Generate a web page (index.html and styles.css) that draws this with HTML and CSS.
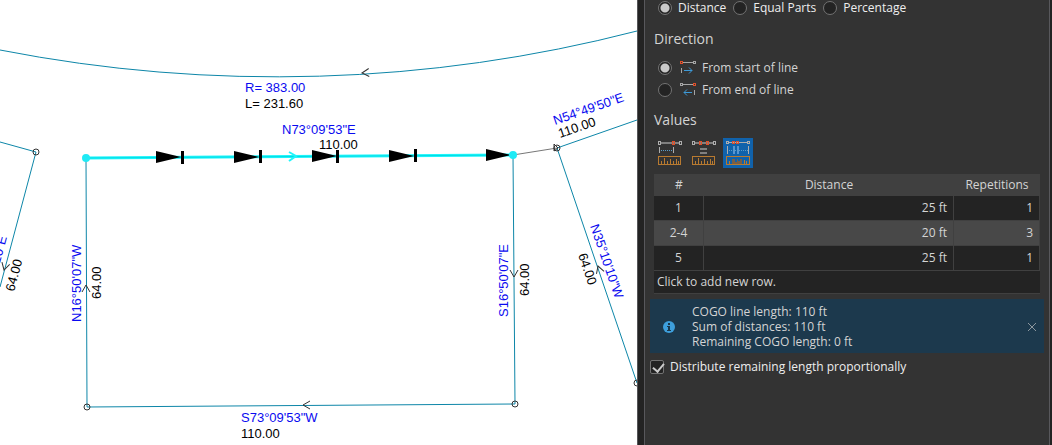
FILE: index.html
```html
<!DOCTYPE html>
<html lang="en">
<head>
<meta charset="UTF-8" />
<meta name="viewport" content="width=device-width, initial-scale=1" />
<title>Divide Line</title>
<link rel="stylesheet" href="styles.css">
</head>
<body>

<main class="map">
  <svg class="parcels" viewBox="0 0 637 445" preserveAspectRatio="xMinYMin slice" role="img" aria-label="Parcel map">
    <defs>
      <path id="tick" d="M7 -4 L0 0 L7 4" />
      <path id="arrow" d="M-26 -6 L-1 0 L-26 6 Z" />
      <rect id="stop" x="-1" y="-6" width="3" height="13" />
    </defs>

    <!-- boundaries -->
    <g class="boundary">
      <path d="M0 50 A1440 1440 0 0 0 637 31" />
      <path d="M0 142 L36 152 L0 287" />
      <path d="M86 158 L87 407 L515 404 L513 155" />
      <path d="M637 120 L557 148 L637 383" />
    </g>
    <path class="link" d="M513 155 L557 148" />

    <!-- selected line -->
    <path class="selected" d="M86 158 L513 155" />
    <path class="selected-core" d="M86 158 L513 155" />
    <path class="selected-tick" d="M289 152 L296 156 L289 161" />
    <g class="split">
      <use href="#arrow" x="182" y="157" />
      <use href="#stop" x="182" y="157" />
      <use href="#arrow" x="260" y="157" />
      <use href="#stop" x="260" y="156" />
      <use href="#arrow" x="338" y="156" />
      <use href="#stop" x="337" y="156" />
      <use href="#arrow" x="415" y="156" />
      <use href="#stop" x="415" y="155" />
      <use href="#arrow" x="512" y="155" />
    </g>
    <circle class="node-selected filled" cx="86" cy="158" r="3" />
    <circle class="node-selected filled" cx="513" cy="155" r="3" />

    <!-- direction ticks -->
    <g class="tick">
      <use href="#tick" transform="translate(362 73) rotate(-4)" />
      <use href="#tick" transform="translate(303 405)" />
      <use href="#tick" transform="translate(86 285) rotate(90)" />
      <use href="#tick" transform="translate(514 277) rotate(-90)" />
      <use href="#tick" transform="translate(598 266) rotate(71)" />
      <use href="#tick" transform="translate(4 270) rotate(-75)" />
    </g>
    <g class="node">
      <circle cx="36" cy="152" r="3" />
      <circle cx="87" cy="407" r="3" />
      <circle cx="515" cy="404" r="3" />
      <circle cx="557" cy="148" r="3" />
      <path d="M554 144 V151 L558 148 Z" />
      <circle cx="637" cy="383" r="3" />
    </g>

    <!-- labels -->
    <g class="bearing">
      <text x="245" y="92">R= 383.00</text>
      <text x="282" y="134">N73°09'53"E</text>
      <text x="241" y="422">S73°09'53"W</text>
      <text transform="translate(81 322) rotate(-90)">N16°50'07"W</text>
      <text transform="translate(508 317) rotate(-90)">S16°50'07"E</text>
      <text transform="translate(555 125) rotate(-19)">N54°49'50"E</text>
      <text transform="translate(590 226) rotate(71)">N35°10'10"W</text>
      <text transform="translate(7 237) rotate(-75)" text-anchor="end">N35°10'10"E</text>
    </g>
    <g class="length">
      <text x="245" y="108">L= 231.60</text>
      <text x="319" y="149">110.00</text>
      <text x="241" y="438">110.00</text>
      <text transform="translate(101 299) rotate(-90)">64.00</text>
      <text transform="translate(529 296) rotate(-90)">64.00</text>
      <text transform="translate(560 138) rotate(-19)">110.00</text>
      <text transform="translate(578 255) rotate(71)">64.00</text>
      <text transform="translate(14 292) rotate(-75)">64.00</text>
    </g>
  </svg>
</main>

<aside class="dock">
  <form class="panel">
    <div class="options">
      <label class="option"><input type="radio" name="method" checked />Distance</label>
      <label class="option"><input type="radio" name="method" />Equal Parts</label>
      <label class="option"><input type="radio" name="method" />Percentage</label>
    </div>

    <h2>Direction</h2>
    <div class="directions">
      <label class="option">
        <input type="radio" name="direction" checked />
        <svg class="direction-icon" viewBox="0 1 16 14" aria-hidden="true">
          <path class="rail" d="M3 2.5 H13" />
          <rect class="hot" x="0.5" y="1.5" width="2" height="2" />
          <rect class="rail" x="13.5" y="1.5" width="2" height="2" />
          <path class="rail" d="M1.5 8 V13" />
          <path class="flow" d="M4 10.5 H12 M9 7.5 L12 10.5 L9 13.5" />
        </svg>
        From start of line
      </label>
      <label class="option">
        <input type="radio" name="direction" />
        <svg class="direction-icon" viewBox="0 1 16 14" aria-hidden="true">
          <path class="rail" d="M3 2.5 H13" />
          <rect class="rail" x="0.5" y="1.5" width="2" height="2" />
          <rect class="hot" x="13.5" y="1.5" width="2" height="2" />
          <path class="rail" d="M14.5 8 V13" />
          <path class="flow" d="M12 10.5 H4 M7 7.5 L4 10.5 L7 13.5" />
        </svg>
        From end of line
      </label>
    </div>

    <h2 class="values">Values</h2>
    <div class="tools">
      <button type="button" class="tool" aria-label="Single distance">
        <svg viewBox="0 0 24 24" aria-hidden="true">
          <path class="bar" d="M3 2 H21" />
          <rect class="end" x="0.5" y="0.5" width="2" height="3" />
          <rect class="end" x="21.5" y="0.5" width="2" height="3" />
          <rect class="hot" x="14.5" y="0.5" width="2" height="3" />
          <path class="end" d="M1.5 6 V12 M15.5 6 V12" />
          <path class="dots" d="M3 9.5 H14" />
          <rect class="ruler" x="0.5" y="15.5" width="22" height="8" />
          <path class="ruler" d="M3.5 20 V23 M6.5 17 V23 M9.5 20 V23 M12.5 18 V23 M15.5 20 V23 M18.5 18 V23 M20.5 20 V23" />
        </svg>
      </button>
      <button type="button" class="tool" aria-label="Equal distances">
        <svg viewBox="0 0 24 24" aria-hidden="true">
          <path class="bar" d="M3 2 H21" />
          <rect class="end" x="0.5" y="0.5" width="2" height="3" />
          <rect class="end" x="21.5" y="0.5" width="2" height="3" />
          <rect class="hot" x="7.5" y="0.5" width="2" height="3" />
          <rect class="hot" x="14.5" y="0.5" width="2" height="3" />
          <path class="bar" d="M8 8 H15 M8 12 H15" />
          <rect class="ruler" x="0.5" y="15.5" width="22" height="8" />
          <path class="ruler" d="M3.5 20 V23 M6.5 17 V23 M9.5 20 V23 M12.5 18 V23 M15.5 20 V23 M18.5 18 V23 M20.5 20 V23" />
        </svg>
      </button>
      <button type="button" class="tool active" aria-label="Variable distances" aria-pressed="true">
        <svg viewBox="0 0 24 24" aria-hidden="true">
          <path class="end" d="M3 1.5 H21" />
          <rect class="end" x="0.5" y="0.5" width="2" height="2" />
          <rect class="end" x="21.5" y="0.5" width="2" height="2" />
          <rect class="hot" x="6.5" y="0.5" width="2" height="2" />
          <rect class="hot" x="10.5" y="0.5" width="2" height="2" />
          <path class="end" d="M1.5 5 V13 M22.5 5 V13" />
          <path class="gap" d="M8 5 V13 M12 5 V13" />
          <path class="dots" d="M3 9.5 H22" />
          <rect class="ruler" x="0.5" y="15.5" width="23" height="8" />
          <path class="ruler" d="M3.5 20 V23 M20.5 20 V23 M18.5 19 V23" />
          <path class="blocks" d="M6 23 V18 H9 V21 H11 V18 H12 V20 H14 V18 H16 V23 Z" />
        </svg>
      </button>
    </div>

    <table class="grid">
      <thead>
        <tr><th class="num">#</th><th>Distance</th><th class="reps">Repetitions</th></tr>
      </thead>
      <tbody>
        <tr><td>1</td><td>25 ft</td><td>1</td></tr>
        <tr class="current"><td>2-4</td><td>20 ft</td><td>3</td></tr>
        <tr><td>5</td><td>25 ft</td><td>1</td></tr>
      </tbody>
      <tfoot>
        <tr><td colspan="3"><button type="button" class="add-row">Click to add new row.</button></td></tr>
      </tfoot>
    </table>

    <div class="message">
      <svg class="info" viewBox="0 0 12 12" aria-hidden="true">
        <circle cx="6" cy="6" r="6" />
        <path d="M5 2 H7 V4 H5 Z M4 5 H7 V9 H8 V10 H4 V9 H5 V6 H4 Z" />
      </svg>
      <p>COGO line length: 110 ft<br>Sum of distances: 110 ft<br>Remaining COGO length: 0 ft</p>
      <button type="button" class="close" aria-label="Close">
        <svg viewBox="0 0 10 10" aria-hidden="true"><path d="M1 1 L9 9 M9 1 L1 9" /></svg>
      </button>
    </div>

    <label class="distribute"><input type="checkbox" checked />Distribute remaining length proportionally</label>
  </form>
</aside>

</body>
</html>
```

FILE: styles.css
```css
* {
  box-sizing: border-box;
}
body {
  margin: 0;
  min-height: 100vh;
  display: grid;
  grid-template-columns: minmax(0, 1fr) 415px;
  background: #fff;
  color: #d4d4d4;
  font-family: "Open Sans", "Noto Sans", sans-serif;
  font-size: 12px;
  line-height: 16px;
}

/* map */
.map {
  position: relative;
  overflow: hidden;
}
.parcels {
  position: absolute;
  inset: 0;
  width: 100%;
  height: 100%;
  fill: none;
}
.boundary {
  stroke: #0d86a8;
}
.link {
  stroke: #777;
}
.selected {
  stroke: #1ff5fa;
  stroke-width: 3;
}
.selected-core {
  stroke: #00dce6;
}
.selected-tick {
  stroke: #1ff5fa;
  stroke-width: 2;
}
.split {
  fill: #000;
}
.node-selected {
  stroke: #1feaf5;
  stroke-width: 2;
}
.filled {
  fill: #1feaf5;
}
.tick,
.node {
  stroke: #333;
}
.bearing,
.length {
  font-family: "Liberation Sans", Arial, sans-serif;
  font-size: 13px;
}
.bearing {
  fill: #0a0af0;
}
.length {
  fill: #000;
}

/* dock */
.dock {
  padding: 0 2px 0 6px;
  background: #232323;
  border-left: 1px solid #555558;
}
.panel {
  height: 100%;
  padding: 0 5px;
  background: #333;
  border: solid #58585c;
  border-width: 0 1px;
}
.option,
.distribute {
  display: flex;
  align-items: center;
}
.options {
  display: flex;
  gap: 7px;
  padding-left: 8px;
  color: #eee;
}
input {
  appearance: none;
  flex: none;
  width: 14px;
  height: 14px;
  margin: 0 6px 0 0;
  background: #232323;
  border: 1px solid #737373;
}
input[type="radio"] {
  border-radius: 50%;
}
input[type="radio"]:checked {
  background: radial-gradient(circle, #c8c8c8 4px, #232323 5px);
}
h2 {
  margin: 13px 4px 0;
  font-size: 14px;
  font-weight: normal;
  line-height: 20px;
}
.directions {
  display: grid;
  gap: 2px;
  padding: 9px 8px 0;
}
.directions .option {
  height: 20px;
}
.direction-icon {
  width: 16px;
  height: 14px;
  margin: 0 6px 0 2px;
  fill: none;
}
.rail {
  stroke: #a5a5a5;
}
.hot {
  stroke: #e0502a;
}
.flow {
  stroke: #3d9ad8;
}
h2.values {
  margin-top: 10px;
}
.tools {
  display: flex;
  gap: 4px;
  padding: 8px 5px 6px;
}
.tool {
  width: 30px;
  height: 30px;
  padding: 3px;
  background: none;
  border: 0;
}
.tool.active {
  background: #1062ab;
}
.tool svg {
  display: block;
  width: 24px;
  height: 24px;
  fill: none;
}
.bar {
  stroke: #808080;
  stroke-width: 2;
}
.end {
  stroke: #adadad;
}
.dots {
  stroke: #5a9bc8;
  stroke-dasharray: 1 1;
}
.gap {
  stroke: #5795cf;
  stroke-width: 2;
}
.ruler {
  stroke: #b87a30;
}
.blocks {
  fill: #795f46;
}

/* values table */
.grid {
  width: calc(100% - 8px);
  margin-left: 4px;
  border-collapse: separate;
  border-spacing: 0;
  table-layout: fixed;
  background: #232323;
}
.grid th {
  height: 22px;
  padding: 0;
  background: #404040;
  font-weight: normal;
}
.grid .num {
  width: 50px;
}
.grid .reps {
  width: 86px;
}
.grid td {
  height: 25px;
  padding: 0 6px;
  border: solid #404040;
  border-width: 0 1px 1px 0;
  text-align: right;
}
.grid td:first-child {
  text-align: center;
}
.grid .current td {
  background: #484848;
}
.grid tfoot td {
  height: 23px;
  padding: 0;
  border-right: 0;
}
.add-row {
  display: block;
  width: 100%;
  padding: 0 3px;
  background: none;
  border: 0;
  color: inherit;
  font: inherit;
  text-align: left;
}

/* message */
.message {
  display: flex;
  align-items: center;
  margin-top: 5px;
  padding: 5px 7px 4px 13px;
  background: #1c394d;
}
.message p {
  flex: 1;
  margin: 0 0 0 17px;
  line-height: 15px;
}
.info {
  width: 12px;
  height: 12px;
  fill: #3ea0dd;
}
.info path {
  fill: #1c394d;
}
.close {
  padding: 0;
  background: none;
  border: 0;
}
.close svg {
  display: block;
  width: 10px;
  height: 10px;
  stroke: #8c979e;
}
.distribute {
  margin-top: 6px;
  color: #eee;
}
input[type="checkbox"] {
  border-radius: 2px;
}
input[type="checkbox"]:checked::before {
  content: "";
  display: block;
  width: 5px;
  height: 9px;
  margin: 0 4px;
  border: solid #ccc;
  border-width: 0 2px 2px 0;
  transform: rotate(40deg);
}
```
